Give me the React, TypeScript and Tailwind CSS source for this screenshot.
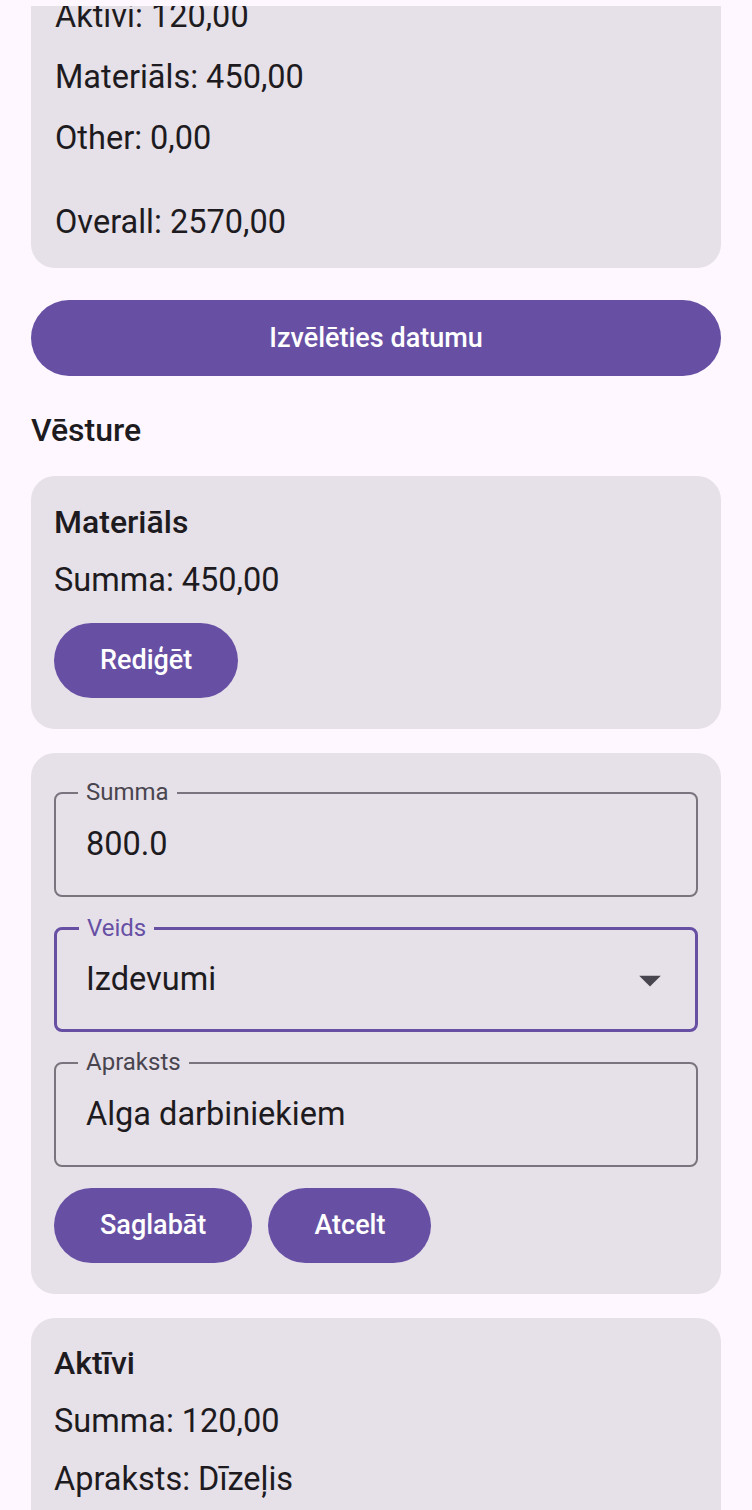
import React from "react";

const font = { fontFamily: "Roboto, 'Noto Sans', sans-serif" };

function PillButton({ label, className = "" }: { label: string; className?: string }) {
  return (
    <button
      className={`h-[75px] rounded-full bg-[#6750a4] px-[46px] text-[27px] font-medium text-white ${className}`}
    >
      {label}
    </button>
  );
}

function OutlinedField({
  label,
  value,
  focused,
  dropdown,
}: {
  label: string;
  value: string;
  focused?: boolean;
  dropdown?: boolean;
}) {
  return (
    <div
      className={`relative flex h-[105px] items-center rounded-[8px] ${
        focused ? "border-[3px] border-[#6750a4] pl-[29px]" : "border-2 border-[#79747e] pl-[30px]"
      }`}
    >
      <span
        className={`absolute left-[22px] top-[-15px] bg-[#e6e0e9] px-[8px] text-[24px] leading-[26px] ${
          focused ? "text-[#6750a4]" : "text-[#49454f]"
        }`}
      >
        {label}
      </span>
      <span className="flex-1 text-[32.5px] text-[#1d1b20]">{value}</span>
      {dropdown && (
        <svg width="52" height="52" viewBox="0 0 24 24" className="mr-[19px]">
          <path d="M7 10l5 5 5-5z" fill="#49454f" />
        </svg>
      )}
    </div>
  );
}

export default function App() {
  return (
    <div className="min-h-[1510px] bg-[#fef7ff] px-[31px] pt-[6px] text-[#1d1b20]" style={font}>
      {/* summary card, scrolled partly out of view */}
      <div className="overflow-hidden rounded-b-[24px] bg-[#e6e0e9] px-[24px] pb-[26px] text-[32.5px] leading-[40px]">
        <p className="-mt-[10px]">Aktīvi: 120,00</p>
        <p className="mt-[21px]">Materiāls: 450,00</p>
        <p className="mt-[21px]">Other: 0,00</p>
        <p className="mt-[44px]">Overall: 2570,00</p>
      </div>

      <button className="mt-[32px] h-[76px] w-full rounded-full bg-[#6750a4] text-[27px] font-medium text-white">
        Izvēlēties datumu
      </button>

      <h2 className="mt-[34px] text-[32px] font-medium leading-[40px]">Vēsture</h2>

      <div className="mt-[26px] rounded-[24px] bg-[#e6e0e9] px-[23px] pb-[31px] pt-[26px]">
        <p className="text-[32px] font-medium leading-[40px]">Materiāls</p>
        <p className="mt-[18px] text-[32.5px] leading-[40px]">Summa: 450,00</p>
        <PillButton label="Rediģēt" className="mt-[23px]" />
      </div>

      <div className="mt-[24px] flex flex-col rounded-[24px] bg-[#e6e0e9] px-[23px] pb-[31px] pt-[39px]">
        <OutlinedField label="Summa" value="800.0" />
        <div className="mt-[30px]">
          <OutlinedField label="Veids" value="Izdevumi" focused dropdown />
        </div>
        <div className="mt-[30px]">
          <OutlinedField label="Apraksts" value="Alga darbiniekiem" />
        </div>
        <div className="mt-[21px] flex gap-[16px]">
          <PillButton label="Saglabāt" />
          <PillButton label="Atcelt" />
        </div>
      </div>

      <div className="mt-[24px] rounded-t-[24px] bg-[#e6e0e9] px-[23px] pb-[40px] pt-[25px]">
        <p className="text-[32px] font-medium leading-[40px]">Aktīvi</p>
        <p className="mt-[18px] text-[32.5px] leading-[40px]">Summa: 120,00</p>
        <p className="mt-[18px] text-[32.5px] leading-[40px]">Apraksts: Dīzeļis</p>
      </div>
    </div>
  );
}
